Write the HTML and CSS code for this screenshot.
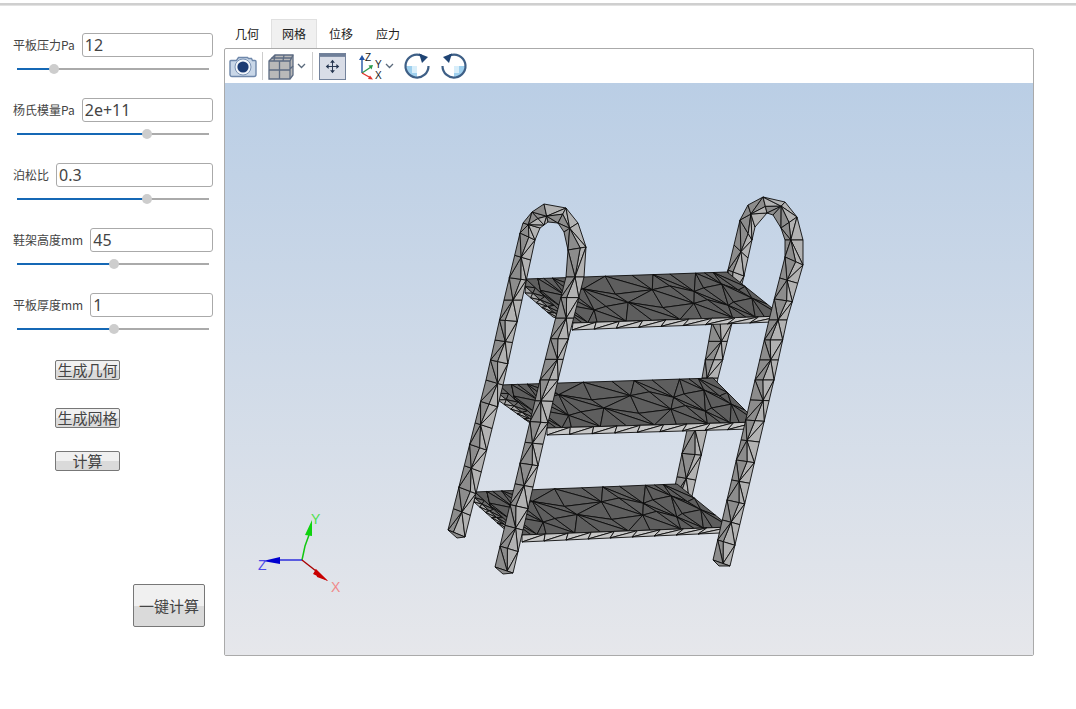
FILE: index.html
```html
<!DOCTYPE html>
<html lang="zh-CN">
<head>
<meta charset="utf-8">
<title>鞋架计算</title>
<link rel="stylesheet" href="styles.css">
</head>
<body>
<div class="topline"></div>
<main class="app">
  <aside class="side">
    <div class="param">
      <div class="row"><label>平板压力Pa</label><input value="12"></div>
      <div class="slider"><div class="fill" style="width:37px"></div><div class="thumb" style="left:37px"></div></div>
    </div>
    <div class="param">
      <div class="row"><label>杨氏模量Pa</label><input value="2e+11"></div>
      <div class="slider"><div class="fill" style="width:130px"></div><div class="thumb" style="left:130px"></div></div>
    </div>
    <div class="param">
      <div class="row"><label>泊松比</label><input value="0.3"></div>
      <div class="slider"><div class="fill" style="width:130px"></div><div class="thumb" style="left:130px"></div></div>
    </div>
    <div class="param">
      <div class="row"><label>鞋架高度mm</label><input value="45"></div>
      <div class="slider"><div class="fill" style="width:97px"></div><div class="thumb" style="left:97px"></div></div>
    </div>
    <div class="param">
      <div class="row"><label>平板厚度mm</label><input value="1"></div>
      <div class="slider"><div class="fill" style="width:97px"></div><div class="thumb" style="left:97px"></div></div>
    </div>
    <button class="btn geo">生成几何</button>
    <button class="btn gridb">生成网格</button>
    <button class="btn calc">计算</button>
    <button class="btn big">一键计算</button>
  </aside>
  <section class="work">
    <nav class="tabs">
      <span class="tab">几何</span>
      <span class="tab active">网格</span>
      <span class="tab">位移</span>
      <span class="tab">应力</span>
    </nav>
    <div class="viewer">
      <div class="toolbar">
        <svg class="i-cam" width="28" height="24" viewBox="0 0 28 24">
          <path d="M1.500 6.500h6l2-3h9l1 1h3l1 2h2.500a1 1 0 0 1 1 1v13a2 2 0 0 1-2 2h-22a2 2 0 0 1-2-2v-13a1 1 0 0 1 1-1z" fill="#c9d7e8" stroke="#6f88ab" stroke-width="1.400"/>
          <circle cx="14" cy="13" r="8" fill="#f2f6fb" stroke="#7b93b4"/>
          <circle cx="14" cy="13" r="5.600" fill="#1b3b73"/>
        </svg>
        <span class="sep"></span>
        <svg class="i-cube" width="26" height="28" viewBox="0 0 26 28">
          <path d="M1 9l6-6h18v20l-3 4H1z" fill="#b9b9b9" stroke="#5c6b82" stroke-width="1.300"/>
          <path d="M1 9h21v18M22 9l3-6M7 3l-1 6M16 3l-1 6M11.500 9v18M1 18h21M22 17l3-3M3.500 6h20" fill="none" stroke="#5c6b82" stroke-width="1.300"/>
        </svg>
        <svg class="i-chev" width="9" height="6" viewBox="0 0 9 6"><path d="M1 1l3.500 3.500L8 1" fill="none" stroke="#5b6a7c" stroke-width="1.300"/></svg>
        <span class="sep sep2"></span>
        <svg class="i-fit" width="27" height="27" viewBox="0 0 28 28">
          <rect x=".5" y=".5" width="27" height="27" fill="#d9dde7" stroke="#6f7f99"/>
          <rect x="1" y="1" width="26" height="3" fill="#6f7f99"/>
          <path d="M14 9v10M9 14h10" stroke="#24344f" stroke-width="1"/>
          <path d="M14 7l2.500 3h-5zM14 21l2.500-3h-5zM7 14l3-2.500v5zM21 14l-3-2.500v5z" fill="#24344f"/>
        </svg>
        <svg class="i-axes" width="26" height="27" viewBox="0 0 26 27">
          <path d="M4 20V6" stroke="#2355a5" stroke-width="1.400"/><path d="M4 2l3 5H1z" fill="#2355a5"/>
          <path d="M4 20l9-6" stroke="#2c9a4c" stroke-width="1.400"/><path d="M15 12l-1.500 4.500-3-4z" fill="#2c9a4c"/>
          <path d="M4 20l9 5" stroke="#e0342c" stroke-width="1.400"/><path d="M15 26.500l-5-.5 2-3.500z" fill="#e0342c"/>
          <text x="7" y="8" class="ax">Z</text><text x="17" y="15" class="ax">Y</text><text x="17" y="26" class="ax">X</text>
        </svg>
        <svg class="i-chev i-chev2" width="9" height="6" viewBox="0 0 9 6"><path d="M1 1l3.500 3.500L8 1" fill="none" stroke="#5b6a7c" stroke-width="1.300"/></svg>
        <svg class="i-rot" width="26" height="26" viewBox="0 0 26 26">
          <path d="M2 13h11v11.700A12 12 0 0 1 2 13z" fill="#9fd0ee"/>
          <path d="M8 13h5v7H8z" fill="#d8eefa"/>
          <path d="M17.500 2.500A11.500 11.500 0 1 0 24.500 13" fill="none" stroke="#3e5f86" stroke-width="2.200"/>
          <path d="M15 .5L24 4l-6 6z" fill="#1f4474"/>
        </svg>
        <svg class="i-rot i-rot2" width="26" height="26" viewBox="0 0 26 26">
          <path d="M24 13H13v11.700A12 12 0 0 0 24 13z" fill="#9fd0ee"/>
          <path d="M13 13h5v7h-5z" fill="#d8eefa"/>
          <path d="M8.500 2.500A11.500 11.500 0 1 1 1.500 13" fill="none" stroke="#3e5f86" stroke-width="2.200"/>
          <path d="M11 .5L2 4l6 6z" fill="#1f4474"/>
        </svg>
      </div>
      <div class="canvas">
        <svg class="scene" viewBox="225 83 808 572" width="808" height="572">
          <g id="mesh"></g>
          <g class="triad">
            <path d="M302 560L305 546L309 535" stroke="#11c811" stroke-width="1.500" fill="none"/>
            <path d="M312 520L305 535L312 536z" fill="#0fd30f"/>
            <path d="M302 560H272" stroke="#0000d8" stroke-width="1.200"/>
            <path d="M263 561L280 557V564z" fill="#0000d0"/>
            <path d="M302 560L316 571" stroke="#a80000" stroke-width="1.400"/>
            <path d="M328 581L315 569L317 577z" fill="#c80000"/>
            <path d="M328 581L316 569L313 574z" fill="#c80000"/>
            <text x="311" y="524" class="lbl ly">Y</text>
            <text x="258" y="570" class="lbl lz">Z</text>
            <text x="331" y="592" class="lbl lx">X</text>
          </g>
        </svg>
      </div>
    </div>
  </section>
</main>
<script src="mesh.js"></script>
</body>
</html>
```
FILE: styles.css
```css
* { box-sizing: border-box; }
html, body { margin: 0; padding: 0; background: #fff; }
body {
  width: 1076px;
  height: 709px;
  overflow: hidden;
  font-family: "Noto Sans CJK SC", "Noto Sans", sans-serif;
  color: #444;
}
.topline {
  margin-top: 3px;
  height: 3px;
  border-top: 2px solid #cfcfcf;
  border-bottom: 1px solid #e2e2e2;
}
.app { display: flex; }
.side {
  width: 224px;
  flex: none;
  padding: 27px 11px 0 13px;
  display: flex;
  flex-direction: column;
}
.param { margin-bottom: 28px; }
.row { display: flex; align-items: center; gap: 7px; height: 24px; }
.row label { font-size: 12px; line-height: 24px; white-space: nowrap; }
.row input {
  flex: 1;
  min-width: 0;
  height: 24px;
  border: 1px solid #aaa;
  border-radius: 3px;
  padding: 0 2px;
  font: 16px "Noto Sans", sans-serif;
  color: #444;
  background: #fff;
}
.slider { position: relative; margin: 11px 0 0 4px; width: 192px; height: 2px; background: #aaa; }
.fill { height: 2px; background: #1568b5; }
.thumb {
  position: absolute;
  top: -4px;
  width: 10px;
  height: 10px;
  margin-left: -5px;
  border-radius: 50%;
  background: #cdcdcd;
}
.param:nth-of-type(5) { margin-bottom: 0; }
.btn {
  width: 65px;
  height: 20px;
  padding: 0;
  border: 1px solid #777;
  border-radius: 2px;
  background: linear-gradient(#f0f0f0 0 50%, #dadada 50% 100%);
  font: 15px/18px "Noto Sans CJK SC", sans-serif;
  color: #444;
  margin-left: 42px;
  white-space: nowrap;
}
.geo { margin-top: 30px; }
.gridb { margin-top: 28px; }
.calc { margin-top: 23px; }
.big { width: 72px; height: 43px; margin: 113px 0 0 120px; }
.work { flex: none; width: 810px; display: flex; flex-direction: column; padding-top: 13px; }
.tabs { display: flex; height: 29px; font-size: 12px; }
.tab {
  width: 47px;
  line-height: 28px;
  text-align: center;
  padding-right: 1px;
  border: 1px solid transparent;
  border-bottom: 0;
  color: #222;
}
.tab.active { background: #f0f0f0; border-color: #e0e0e0; width: 46px; margin-right: 1px; padding-right: 0; }
.viewer {
  width: 810px;
  height: 608px;
  border: 1px solid #aaa;
  border-radius: 2px;
  background: #fff;
  display: flex;
  flex-direction: column;
}
.toolbar { height: 34px; flex: none; display: flex; align-items: center; padding-left: 4px; }
.toolbar svg { overflow: visible; }
.sep { width: 1px; height: 28px; background: #ccc; margin-left: 5px; }
.sep2 { margin-left: 6px; }
.i-cube { margin-left: 5px; }
.i-chev { margin-left: 3px; }
.i-fit { margin-left: 6px; }
.i-axes { margin-left: 12px; }
.i-chev2 { margin-left: 1px; }
.i-rot { margin-left: 10px; }
.i-rot2 { margin-left: 11px; }
.ax { font: 10px "Liberation Sans", sans-serif; fill: #222; }
.canvas {
  flex: 1;
  background: linear-gradient(#bacee5, #e6e7eb);
}
.scene { display: block; }
.lbl { font: 14px "Liberation Sans", sans-serif; }
.ly { fill: #4ee04e; }
.lz { fill: #4a4ae8; }
.lx { fill: #f08a8a; }
```
FILE: mesh.js
```js
// Draws the triangulated shoe-rack mesh into the scene.
var root = document.getElementById('mesh');
var NS = 'http://www.w3.org/2000/svg';
var DARK = '#8c8c8c', LIGHT = '#b2b2b2';
function tri(pts, fill) {
  var p = document.createElementNS(NS, 'polygon');
  p.setAttribute('points', pts.map(function (q) { return q[0].toFixed(1) + ',' + q[1].toFixed(1); }).join(' '));
  p.setAttribute('fill', fill);
  p.setAttribute('stroke', '#0c0c0c');
  p.setAttribute('stroke-width', '0.9');
  p.setAttribute('stroke-linejoin', 'round');
  root.appendChild(p);
}
function mix(a, b, t) { return [a[0] + (b[0] - a[0]) * t, a[1] + (b[1] - a[1]) * t]; }

function strip(sections, step) {
  var rows = [], k = 0;
  for (var s = 0; s < sections.length - 1; s++) {
    var a = sections[s], b = sections[s + 1];
    var mA = mix([a[0], a[1]], [a[2], a[3]], .5), mB = mix([b[0], b[1]], [b[2], b[3]], .5);
    var len = Math.hypot(mB[0] - mA[0], mB[1] - mA[1]);
    var n = Math.max(1, Math.round(len / step));
    for (var i = 0; i < n; i++) {
      var t = i / n;
      rows.push(mkRow(mix([a[0], a[1]], [b[0], b[1]], t), mix([a[2], a[3]], [b[2], b[3]], t), k++));
    }
  }
  var last = sections[sections.length - 1];
  rows.push(mkRow([last[0], last[1]], [last[2], last[3]], k));
  for (var r = 0; r < rows.length - 1; r++) {
    var A = rows[r], B = rows[r + 1];
    var outerDark = A.o[0] + B.o[0] < A.i[0] + B.i[0] - 4;
    var innerDark = A.i[0] + B.i[0] < A.o[0] + B.o[0] - 4;
    if (!outerDark && !innerDark) innerDark = true;
    var oc = outerDark ? DARK : LIGHT, ic = innerDark ? DARK : LIGHT;
    if (r % 2) {
      tri([A.o, A.m, B.o], oc); tri([A.m, B.m, B.o], oc);
      tri([A.i, A.m, B.i], ic); tri([A.m, B.m, B.i], ic);
    } else {
      tri([A.o, A.m, B.m], oc); tri([A.o, B.o, B.m], oc);
      tri([A.i, A.m, B.m], ic); tri([A.i, B.i, B.m], ic);
    }
  }
}
function mkRow(o, i, k) {
  var j = ((k * 7) % 5 - 2) * .09;
  return { o: o, i: i, m: mix(o, i, .5 + j) };
}

var US = [0, .035, .08, .14, .23, .37, .52, .64, .74, .82, .88, .94, 1];
var VS = [0, .33, .66, 1];
function shelf(BL, BR, FR, FL, bandR, bandL, low1, low2) {
  // left under-side
  var c = 5;
  for (var i = 0; i < c; i++) {
    var a = mix(BL, FL, i / c), b = mix(BL, FL, (i + 1) / c), d = mix(low1, low2, i / c), e = mix(low1, low2, (i + 1) / c);
    var m = mix(a, d, .55), m2 = mix(b, e, .55);
    tri([a, b, m], '#6b6b6b'); tri([b, m, m2], '#6b6b6b');
    tri([m, m2, d], '#a6a6a6'); tri([m2, d, e], '#a6a6a6');
  }
  // top surface: interior vertices are nudged so the mesh reads as irregular
  function at(x, y) {
    var u = US[x], v = VS[y];
    if (x > 0 && x < US.length - 1) u += ((x * 3 + y * 5) % 4 - 1.5) * .016;
    if (y > 0 && y < VS.length - 1) v += ((x * 5 + y) % 3 - 1) * .07;
    return mix(mix(BL, BR, u), mix(FL, FR, u), v);
  }
  for (var x = 0; x < US.length - 1; x++) {
    for (var y = 0; y < VS.length - 1; y++) {
      var p = at(x, y), q = at(x + 1, y), r = at(x + 1, y + 1), s = at(x, y + 1);
      if ((x + y) % 2) { tri([p, q, r], '#5e5e5e'); tri([p, r, s], '#5e5e5e'); }
      else { tri([p, q, s], '#5e5e5e'); tri([q, r, s], '#5e5e5e'); }
    }
  }
  // front band
  var n = 9;
  for (var k = 0; k < n; k++) {
    var t0 = mix(FL, FR, k / n), t1 = mix(FL, FR, (k + 1) / n), l0 = mix(bandL, bandR, k / n), l1 = mix(bandL, bandR, (k + 1) / n);
    tri([t0, t1, l0], '#c6c6c6'); tri([t1, l0, l1], '#c6c6c6');
  }
}

var rightArch = [
  [672, 500, 690, 505], [687, 430, 707, 430], [702, 378, 718, 378], [712, 323, 732, 323], [728, 270, 744, 276],
  [740, 220, 752, 240], [748, 205, 755, 227], [763, 197, 767, 213], [785, 202, 773, 215], [797, 217, 781, 228],
  [803, 240, 785, 240], [803, 265, 785, 257], [787, 320, 769, 320], [774, 380, 755, 380], [730, 566, 713, 560]
];
var leftArch = [
  [448, 530, 465, 537], [486, 380, 503, 385], [504, 300, 522, 300], [520, 233, 535, 240], [523, 223, 540, 228],
  [532, 212, 544, 225], [544, 204, 548, 222], [566, 208, 558, 223], [578, 223, 564, 232], [586, 247, 568, 250],
  [584, 277, 566, 277], [558, 380, 540, 380], [513, 573, 495, 567]
];

// back part of the right arch sits behind the shelves
strip(rightArch.slice(0, 5), 22);
shelf([475, 492], [677, 484], [730, 527], [522, 535], [720, 533], [522, 542], [474, 502], [503, 528]);
shelf([499, 385], [713, 378], [757, 422], [547, 428], [750, 429], [547, 435], [498, 400], [530, 423]);
shelf([526, 279], [727, 272], [782, 316], [573, 323], [772, 322], [572, 330], [525, 293], [553, 317]);
strip(rightArch.slice(4), 22);
strip(leftArch, 22);
tri([[448, 530], [457, 538], [465, 537]], DARK);
tri([[495, 567], [503, 574], [513, 573]], DARK);
tri([[713, 560], [719, 566], [730, 566]], DARK);
```
